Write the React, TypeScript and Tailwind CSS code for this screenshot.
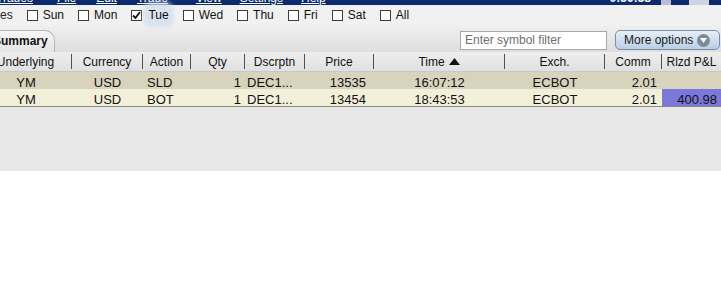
import React from 'react';

const days = [
  { label: 'Sun', checked: false },
  { label: 'Mon', checked: false },
  { label: 'Tue', checked: true },
  { label: 'Wed', checked: false },
  { label: 'Thu', checked: false },
  { label: 'Fri', checked: false },
  { label: 'Sat', checked: false },
  { label: 'All', checked: false },
];

const columns = [
  { title: 'Underlying', w: 'w-[92px]' },
  { title: 'Currency', w: 'w-[71px]' },
  { title: 'Action', w: 'w-[48px]' },
  { title: 'Qty', w: 'w-[54px]' },
  { title: 'Dscrptn', w: 'w-[60px]' },
  { title: 'Price', w: 'w-[69px]' },
  { title: 'Time', w: 'w-[131px]', sort: true },
  { title: 'Exch.', w: 'w-[100px]' },
  { title: 'Comm', w: 'w-[57px]' },
  { title: 'Rlzd P&L', w: 'flex-1' },
];

const trades = [
  { und: 'YM', cur: 'USD', act: 'SLD', qty: 1, desc: 'DEC1...', price: '13535', time: '16:07:12', exch: 'ECBOT', comm: '2.01', pnl: '' },
  { und: 'YM', cur: 'USD', act: 'BOT', qty: 1, desc: 'DEC1...', price: '13454', time: '18:43:53', exch: 'ECBOT', comm: '2.01', pnl: '400.98' },
];

const Checkbox = ({ checked }: { checked: boolean }) => (
  <span className="w-[11px] h-[11px] border border-[#3c3c3c] bg-white flex items-center justify-center">
    {checked && (
      <svg width="9" height="9" viewBox="0 0 9 9">
        <path d="M1 4.5 L3.5 7 L8 1" stroke="#111" strokeWidth="1.8" fill="none" />
      </svg>
    )}
  </span>
);

export default function App() {
  return (
    <div className="w-[721px] h-[300px] bg-white overflow-hidden text-[12px] text-[#111]" style={{ fontFamily: '"Liberation Sans", Arial, sans-serif' }}>
      {/* menu bar, mostly scrolled off */}
      <div className="h-[5px] bg-[#0c2a6e] overflow-hidden flex text-white">
        <div className="-mt-[11px] flex gap-[18px] -ml-[4px] underline">
          <span>Trades</span>
          <span className="ml-[6px]">File</span>
          <span className="ml-[2px]">Edit</span>
          <span className="ml-[2px]">Trade</span>
          <span className="ml-[10px]">View</span>
          <span>Settings</span>
          <span>Help</span>
        </div>
        <div className="-mt-[11px] ml-auto mr-[12px] flex gap-[10px] items-start">
          <span className="font-bold">9:30:38</span>
          <span className="w-[10px] h-[14px] bg-white/70 mt-[2px]"></span>
          <span className="w-[20px] h-[14px] bg-white/80 mt-[2px] ml-[8px]"></span>
        </div>
      </div>

      {/* day filter row */}
      <div className="h-[20px] bg-[#f1f1f1] flex items-center">
        <span className="text-[#222]">es</span>
        <div className="flex items-center ml-[14px]">
          {days.map((d) => (
            <div key={d.label} className="flex items-center mr-[14px]">
              <Checkbox checked={d.checked} />
              <span
                className={`ml-[5px] ${d.checked ? 'bg-[#dae4f1] shadow-[0_0_5px_3px_#d3dfee] rounded-[4px] px-[1px] -mx-[1px] ml-[4px]' : ''}`}
              >
                {d.label}
              </span>
            </div>
          ))}
        </div>
      </div>

      {/* tab row */}
      <div className="h-[27px] bg-gradient-to-b from-[#f0f0f0] to-[#dedede] flex items-end">
        <div className="h-[22px] w-[64px] -ml-[9px] shrink-0 bg-gradient-to-b from-[#f7f7f7] to-[#e4e4e4] border border-b-0 border-[#b5b5b5] rounded-tr-[10px] flex items-center pl-[1px] pb-[2px] font-bold text-[12px]">
          Summary
        </div>
        <div className="ml-auto mb-[2px] flex items-center">
          <div className="w-[147px] h-[19px] border border-[#a8a8a8] bg-white text-[#707070] pl-[4px] flex items-center">
            Enter symbol filter
          </div>
          <div className="ml-[8px] mr-[1px] w-[105px] h-[20px] rounded-[5px] border border-[#7c8ea6] bg-gradient-to-b from-[#e7f0f9] to-[#b9cee4] flex items-center pl-[8px] text-[#1b1b1b]">
            More options
            <span className="ml-[4px] w-[13px] h-[13px] rounded-full bg-[#7e8a98] flex items-center justify-center">
              <svg width="7" height="5" viewBox="0 0 7 5">
                <path d="M0 0 H7 L3.5 5 Z" fill="white" />
              </svg>
            </span>
          </div>
        </div>
      </div>

      {/* table */}
      <div className="-ml-[20px]">
        <div className="h-[20px] flex bg-gradient-to-b from-[#eeeeee] to-[#e0e0e0] border-b border-[#c8c8c8]">
          {columns.map((c, i) => (
            <div
              key={c.title}
              className={`${c.w} flex items-center justify-center ${i < columns.length - 1 ? 'border-r border-[#505050]' : ''} my-[2px]`}
            >
              {c.title}
              {c.sort && (
                <svg className="ml-[4px]" width="11" height="7" viewBox="0 0 11 7">
                  <path d="M5.5 0 L11 7 H0 Z" fill="#111" />
                </svg>
              )}
            </div>
          ))}
        </div>
        {trades.map((t, idx) => (
          <div
            key={t.time}
            className={`flex items-stretch text-[13px] ${idx === 0 ? 'h-[17px] bg-[#d7d3bc]' : 'h-[18px] bg-[#f3f0da] border-b border-[#8a8a80]'}`}
          >
            <div className="w-[92px] text-center pt-[1px]">{t.und}</div>
            <div className="w-[71px] text-center pt-[1px]">{t.cur}</div>
            <div className="w-[48px] pl-[4px] pt-[1px]">{t.act}</div>
            <div className="w-[54px] text-right pr-[4px] pt-[1px]">{t.qty}</div>
            <div className="w-[60px] pl-[2px] pt-[1px]">{t.desc}</div>
            <div className="w-[69px] text-right pr-[8px] pt-[1px]">{t.price}</div>
            <div className="w-[131px] text-center pt-[1px]">{t.time}</div>
            <div className="w-[100px] text-center pt-[1px]">{t.exch}</div>
            <div className="w-[57px] text-right pr-[5px] pt-[1px]">{t.comm}</div>
            <div className={`flex-1 text-right pr-[4px] pt-[1px] ${t.pnl ? 'bg-[#7b78db]' : ''}`}>{t.pnl}</div>
          </div>
        ))}
      </div>
      <div className="h-[64px] bg-[#e8e8e8]"></div>
    </div>
  );
}
